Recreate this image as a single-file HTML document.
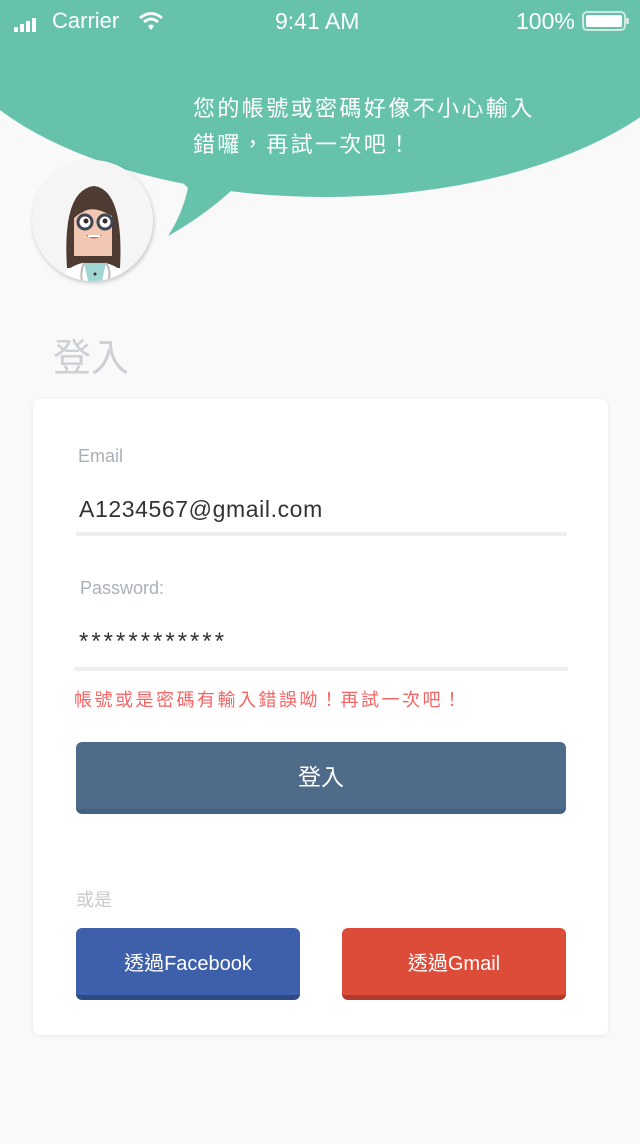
<!DOCTYPE html>
<html><head><meta charset="utf-8">
<style>
*{margin:0;padding:0;box-sizing:border-box}
body{width:640px;height:1144px;background:#f9f9f9;font-family:"Liberation Sans","Noto Sans CJK TC",sans-serif;position:relative;overflow:hidden}
.abs{position:absolute}
.sb{color:#fff;font-size:22px;top:8px}
.card{left:33px;top:399px;width:575px;height:636px;background:#fff;border-radius:6px;box-shadow:0 1px 4px rgba(0,0,0,.08)}
.lbl{color:#aab0b8;font-size:18px}
.val{color:#333;font-size:23px}
.line{height:4px;background:#eeeff0}
.btn{color:#fff;text-align:center;border-radius:6px}
</style></head><body>
<svg class="abs" style="left:0;top:0" width="640" height="300">
<ellipse cx="325" cy="0" rx="392" ry="197" fill="#66c2ab"/>
<path d="M180 180 L188 188 Q182 215 168 236 Q205 215 232 190 L232 180Z" fill="#66c2ab"/>
</svg>
<div class="abs sb" style="left:14px;top:13px"><svg width="30" height="16"><rect x="0" y="10" width="4" height="5" fill="#fff"/><rect x="6" y="7" width="4" height="8" fill="#fff"/><rect x="12" y="4" width="4" height="11" fill="#fff"/><rect x="18" y="1" width="4" height="14" fill="#fff"/></svg></div>
<div class="abs sb" style="left:52px">Carrier</div>
<svg class="abs" style="left:138px;top:11px" width="26" height="20"><path d="M2 7 Q13 -2 24 7" stroke="#fff" stroke-width="3" fill="none"/><path d="M6 11 Q13 5 20 11" stroke="#fff" stroke-width="3" fill="none"/><path d="M10 15 L13 19 L16 15 Q13 12 10 15Z" fill="#fff"/></svg>
<div class="abs sb" style="left:275px;font-size:23px">9:41 AM</div>
<div class="abs sb" style="left:516px;font-size:23px">100%</div>
<svg class="abs" style="left:582px;top:11px" width="48" height="22"><rect x="1" y="1" width="42" height="18" rx="4" fill="none" stroke="#cfe9e1" stroke-width="2"/><rect x="4" y="4" width="36" height="12" rx="2" fill="#fff"/><rect x="44" y="7" width="3" height="6" fill="#cfe9e1"/></svg>
<div class="abs" style="left:193px;top:91px;color:#fff;font-size:22px;line-height:36px;letter-spacing:2.4px">您的帳號或密碼好像不小心輸入<br>錯囉，再試一次吧！</div>
<div class="abs" style="left:32px;top:160px;width:121px;height:121px;border-radius:50%;background:#f5f5f5;box-shadow:1px 2px 4px rgba(0,0,0,.2);overflow:hidden">
<svg width="121" height="121"><path d="M35 108 Q30 30 62 26 Q92 30 88 108Z" fill="#4e3b31"/><path d="M42 96 L42 58 Q62 40 80 56 L80 96Z" fill="#f1c7b3"/><path d="M44 62 Q52 40 80 56 Q72 36 58 38Z" fill="#4e3b31"/><circle cx="53" cy="62" r="7" fill="#fff" stroke="#3f4654" stroke-width="3"/><circle cx="73" cy="62" r="7" fill="#fff" stroke="#3f4654" stroke-width="3"/><circle cx="54" cy="61" r="2.5" fill="#3a2b24"/><circle cx="73" cy="61" r="2.5" fill="#3a2b24"/><path d="M54 75 Q62 82 70 75Z" fill="#e8574d"/><path d="M56 75 L68 75 L68 77 L56 77Z" fill="#fff"/><path d="M28 121 Q32 108 50 103 L74 103 Q92 108 96 121Z" fill="#fff"/><path d="M52 103 L56 121 L70 121 L74 103Z" fill="#9fd6d4"/><path d="M52 103 Q48 112 50 121 M74 103 Q80 112 76 121" stroke="#bbb" stroke-width="2" fill="none"/><circle cx="63" cy="114" r="1.5" fill="#333"/></svg></div>
<div class="abs" style="left:53px;top:327px;font-size:38px;color:#cdd0d4">登入</div>
<div class="abs card"></div>
<div class="abs lbl" style="left:78px;top:446px">Email</div>
<div class="abs val" style="left:79px;top:496px;letter-spacing:0.6px">A1234567@gmail.com</div>
<div class="abs line" style="left:76px;top:532px;width:491px"></div>
<div class="abs lbl" style="left:80px;top:578px">Password:</div>
<div class="abs val" style="left:79px;top:628px;font-size:24px;letter-spacing:3px">************</div>
<div class="abs line" style="left:74px;top:667px;width:494px"></div>
<div class="abs" style="left:74px;top:686px;color:#f76464;font-size:18px;letter-spacing:2.5px">帳號或是密碼有輸入錯誤呦！再試一次吧！</div>
<div class="abs btn" style="left:76px;top:742px;width:490px;height:72px;background:#4e6b8a;border-bottom:5px solid #456080;font-size:23px;line-height:70px">登入</div>
<div class="abs" style="left:76px;top:886px;color:#c8cacd;font-size:18px">或是</div>
<div class="abs btn" style="left:76px;top:928px;width:224px;height:72px;background:#3e60aa;border-bottom:5px solid #2d4a85;font-size:20px;line-height:72px">透過Facebook</div>
<div class="abs btn" style="left:342px;top:928px;width:224px;height:72px;background:#dd4c39;border-bottom:5px solid #b23a2d;font-size:20px;line-height:72px">透過Gmail</div>
</body></html>
